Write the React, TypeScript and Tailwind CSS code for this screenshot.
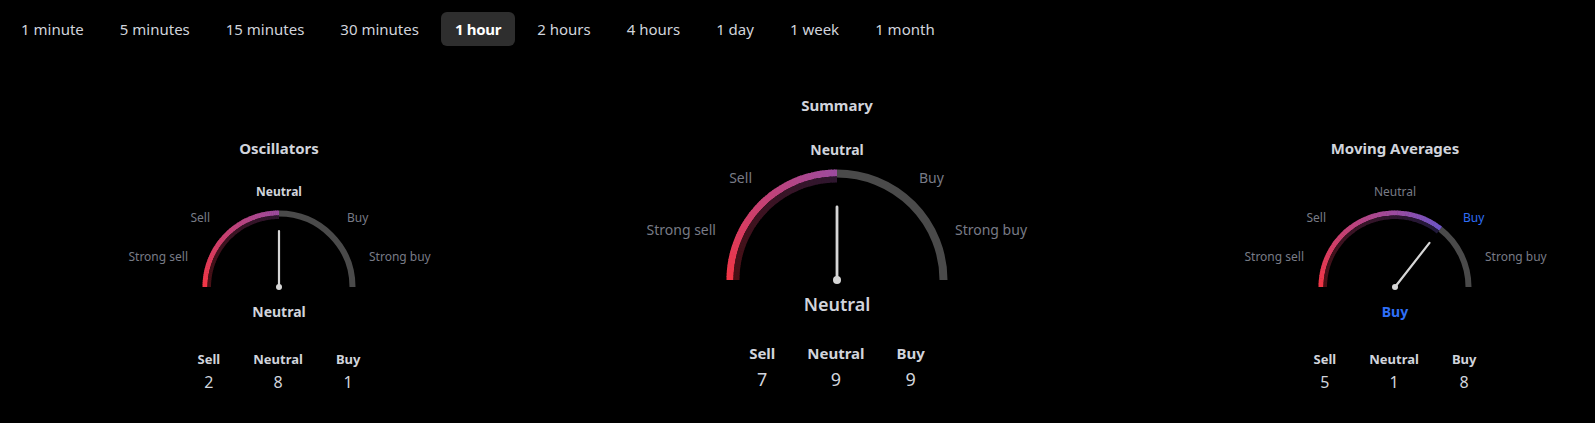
import React from 'react';

type Level = 'Strong sell' | 'Sell' | 'Neutral' | 'Buy' | 'Strong buy';

const TABS = ['1 minute', '5 minutes', '15 minutes', '30 minutes', '1 hour', '2 hours', '4 hours', '1 day', '1 week', '1 month'];

const STOPS = [
  [242, 54, 69],
  [156, 76, 160],
  [41, 98, 255],
];

// colour along the arc, 180° (left) → 0° (right)
function colorAt(deg: number, dim = 1): string {
  const t = (180 - deg) / 180;
  const [a, b, f] = t <= 0.5 ? [STOPS[0], STOPS[1], t / 0.5] : [STOPS[1], STOPS[2], (t - 0.5) / 0.5];
  const c = a.map((v, i) => Math.round((v + (b[i] - v) * f) * dim));
  return `rgb(${c[0]},${c[1]},${c[2]})`;
}

function arc(cx: number, cy: number, r: number, a0: number, a1: number): string {
  const x0 = cx + r * Math.cos((a0 * Math.PI) / 180);
  const y0 = cy - r * Math.sin((a0 * Math.PI) / 180);
  const x1 = cx + r * Math.cos((a1 * Math.PI) / 180);
  const y1 = cy - r * Math.sin((a1 * Math.PI) / 180);
  return `M ${x0} ${y0} A ${r} ${r} 0 0 1 ${x1} ${y1}`;
}

interface GaugeProps {
  size: 'sm' | 'lg';
  angle: number;
  active: Level;
}

const GEO = {
  sm: { w: 320, h: 134, cx: 160, cy: 129, r: 76.5, gray: 6, bright: 5, dark: 3.5, needle: 56, nw: 2.2, pivot: 3 },
  lg: { w: 400, h: 170, cx: 200, cy: 165, r: 110.5, gray: 8, bright: 7, dark: 6, needle: 73, nw: 2.8, pivot: 4 },
};

function Gauge({ size, angle, active }: GaugeProps): React.ReactElement {
  const g = GEO[size];
  const steps = 60;
  const segs: { d: string; dd: string; c: string; cd: string }[] = [];
  for (let i = 0; i < steps; i++) {
    const a0 = 180 - ((180 - angle) * i) / steps;
    const a1 = 180 - ((180 - angle) * (i + 1)) / steps;
    const a1x = i === steps - 1 ? a1 : a1 - 0.4;
    const mid = (a0 + a1) / 2;
    segs.push({
      d: arc(g.cx, g.cy, g.r - g.bright / 2, a0, a1x),
      dd: arc(g.cx, g.cy, g.r - g.bright - g.dark / 2, a0, a1x),
      c: colorAt(mid),
      cd: colorAt(mid, 0.3),
    });
  }
  const rad = (angle * Math.PI) / 180;
  const tipX = g.cx + g.needle * Math.cos(rad);
  const tipY = g.cy - g.needle * Math.sin(rad);

  const labelBase = size === 'sm' ? 'absolute text-[12px] leading-none whitespace-nowrap' : 'absolute text-[14px] leading-none whitespace-nowrap';
  const tone = (l: Level): string => {
    if (l !== active) return 'text-[#787b86]';
    if (l === 'Neutral') return 'text-[#d1d4dc] font-bold';
    if (l === 'Buy' || l === 'Strong buy') return 'text-[#2f6ff7]';
    return 'text-[#f23645]';
  };

  return (
    <div className={size === 'sm' ? 'relative w-[320px] h-[134px]' : 'relative w-[400px] h-[170px]'}>
      <svg width={g.w} height={g.h} className="absolute inset-0">
        <path d={arc(g.cx, g.cy, g.r - g.gray / 2, angle, 0)} stroke="#4a4a4a" strokeWidth={g.gray} fill="none" />
        {segs.map((s, i) => (
          <g key={i}>
            <path d={s.d} stroke={s.c} strokeWidth={g.bright} fill="none" />
            <path d={s.dd} stroke={s.cd} strokeWidth={g.dark} fill="none" />
          </g>
        ))}
        <line x1={g.cx} y1={g.cy} x2={tipX} y2={tipY} stroke="#d6d6d6" strokeWidth={g.nw} strokeLinecap="round" />
        <circle cx={g.cx} cy={g.cy} r={g.pivot} fill="#d6d6d6" />
      </svg>
      {size === 'sm' ? (
        <>
          <span className={`${labelBase} ${tone('Neutral')} top-[28px] left-1/2 -translate-x-1/2`}>Neutral</span>
          <span className={`${labelBase} ${tone('Sell')} top-[54px] right-[229px]`}>Sell</span>
          <span className={`${labelBase} ${tone('Buy')} top-[54px] left-[228px]`}>Buy</span>
          <span className={`${labelBase} ${tone('Strong sell')} top-[93px] right-[251px]`}>Strong sell</span>
          <span className={`${labelBase} ${tone('Strong buy')} top-[93px] left-[250px]`}>Strong buy</span>
        </>
      ) : (
        <>
          <span className={`${labelBase} text-[13px] ${tone('Neutral')} top-[28px] left-1/2 -translate-x-1/2`}>Neutral</span>
          <span className={`${labelBase} ${tone('Sell')} top-[56px] right-[285px]`}>Sell</span>
          <span className={`${labelBase} ${tone('Buy')} top-[56px] left-[282px]`}>Buy</span>
          <span className={`${labelBase} ${tone('Strong sell')} top-[108px] right-[321px]`}>Strong sell</span>
          <span className={`${labelBase} ${tone('Strong buy')} top-[108px] left-[318px]`}>Strong buy</span>
        </>
      )}
    </div>
  );
}

interface ColumnProps {
  title: string;
  size: 'sm' | 'lg';
  angle: number;
  active: Level;
  counts: [number, number, number];
}

function Column({ title, size, angle, active, counts }: ColumnProps): React.ReactElement {
  const sm = size === 'sm';
  const resultColor = active === 'Neutral' ? 'text-[#d1d4dc]' : 'text-[#2f6ff7]';
  return (
    <div className={sm ? 'w-[558px] flex flex-col items-center pt-[92px]' : 'w-[558px] flex flex-col items-center pt-[49px]'}>
      <div className="text-[15px] leading-[20px] font-bold text-[#d1d4dc]">{title}</div>
      <Gauge size={size} angle={angle} active={active} />
      {sm ? (
        <div className={`mt-[11px] text-[14px] leading-[18px] font-bold ${resultColor}`}>{active}</div>
      ) : (
        <div className={`mt-[7px] text-[18px] leading-[24px] font-semibold ${resultColor}`}>{active}</div>
      )}
      <div className={sm ? 'flex gap-[33px] mt-[30px]' : 'flex gap-[32px] mt-[27px]'}>
        {(['Sell', 'Neutral', 'Buy'] as const).map((label, i) => (
          <div key={label} className="flex flex-col items-center text-[#d1d4dc]">
            <span className={sm ? 'text-[13px] leading-[16px] font-bold' : 'text-[15px] leading-[20px] font-bold'}>{label}</span>
            <span className={sm ? 'mt-[5px] text-[16px] leading-[20px]' : 'mt-[4px] text-[18px] leading-[24px]'}>{counts[i]}</span>
          </div>
        ))}
      </div>
    </div>
  );
}

export default function App(): React.ReactElement {
  return (
    <div className="w-full min-h-screen bg-black overflow-hidden font-['Noto_Sans',Arial,sans-serif]">
      {/* Interval tabs */}
      <div className="flex gap-2 pt-[12px] pl-[7px]">
        {TABS.map((t) => (
          <div
            key={t}
            className={
              t === '1 hour'
                ? 'h-[34px] px-[14px] flex items-center rounded-md bg-[#2e2e2e] text-white font-bold text-[15px] leading-[20px] tracking-[-0.3px]'
                : 'h-[34px] px-[14px] flex items-center rounded-md text-[#d1d4dc] text-[15px] leading-[20px]'
            }
          >
            {t}
          </div>
        ))}
      </div>

      {/* Gauges */}
      <div className="flex w-[1674px]">
        <Column title="Oscillators" size="sm" angle={90} active="Neutral" counts={[2, 8, 1]} />
        <Column title="Summary" size="lg" angle={90} active="Neutral" counts={[7, 9, 9]} />
        <Column title="Moving Averages" size="sm" angle={52} active="Buy" counts={[5, 1, 8]} />
      </div>
    </div>
  );
}
